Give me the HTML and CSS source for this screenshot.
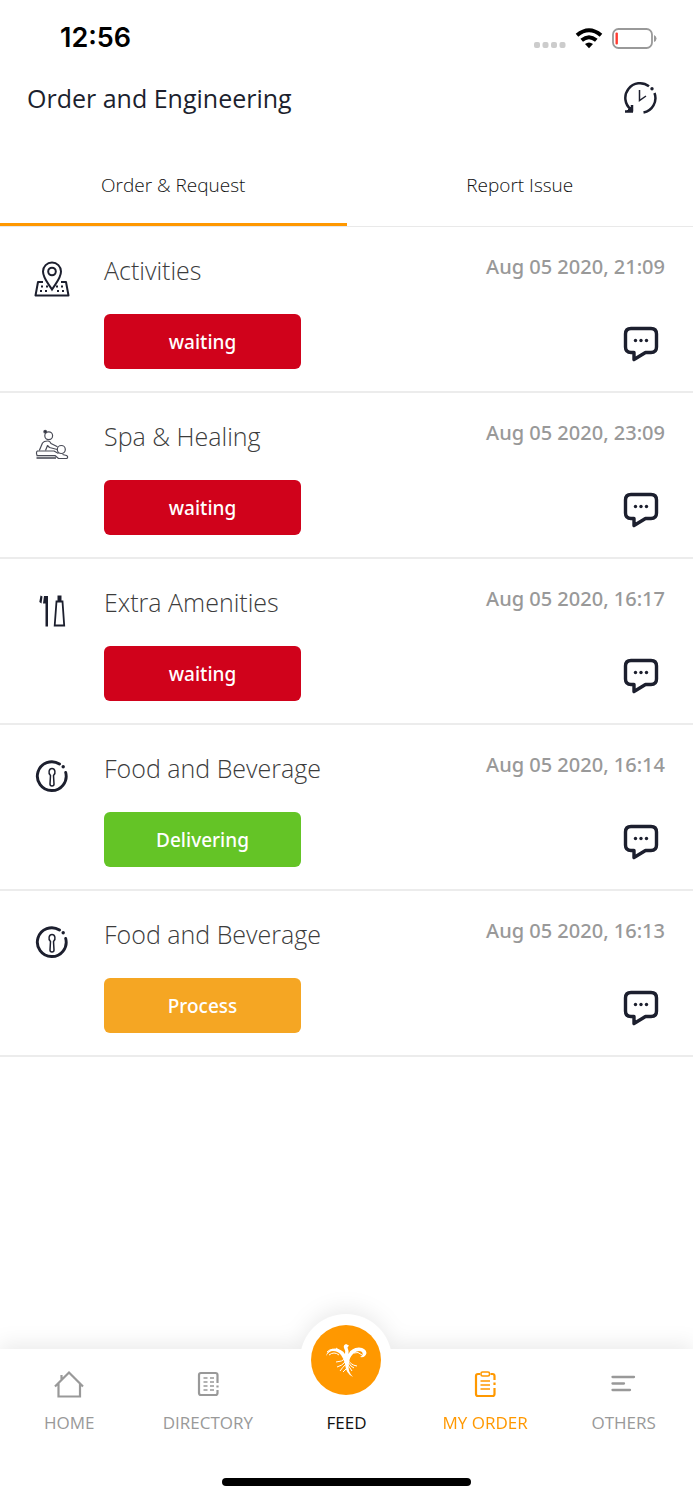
FILE: index.html
```html
<!DOCTYPE html>
<html lang="en">
<head>
<meta charset="utf-8">
<meta name="viewport" content="width=device-width, initial-scale=1">
<title>Order and Engineering</title>
<link rel="stylesheet" href="styles.css">
</head>
<body>
<svg class="sprite" aria-hidden="true">
  <symbol id="chat" viewBox="0 0 36 36">
    <path d="M8 2.500H28Q33.500 2.500 33.500 8V21Q33.500 26.500 28 26.500H22.500L11 33.500V26.500H8Q2.500 26.500 2.500 21V8Q2.500 2.500 8 2.500Z" fill="none" stroke="currentColor" stroke-width="3.400" stroke-linejoin="round"/>
    <g fill="currentColor"><circle cx="12.500" cy="14.500" r="1.700"/><circle cx="18" cy="14.500" r="1.700"/><circle cx="23.500" cy="14.500" r="1.700"/></g>
  </symbol>
  <symbol id="food" viewBox="0 0 36 36">
    <path d="M25.500 5A14.400 14.400 0 1 0 31.700 13.500" fill="none" stroke="currentColor" stroke-width="2.900" stroke-linecap="round"/>
    <circle cx="29.200" cy="7.800" r="1.700" fill="currentColor"/>
    <path d="M16.500 16.500C13.800 14 15 9.500 18 9.500S22.200 14 19.500 16.500L20 25Q20 27 18 27T16 25Z" fill="none" stroke="currentColor" stroke-width="1.500" stroke-linejoin="round"/>
  </symbol>
</svg>
<div class="app">
  <div class="status">
    <span class="clock">12:56</span>
    <div class="indicators">
      <svg class="signal" viewBox="0 0 32 6" fill="#ccc"><rect width="6" height="6" rx="2"/><rect x="8.500" width="6" height="6" rx="2"/><rect x="17" width="6" height="6" rx="2"/><rect x="25.500" width="6" height="6" rx="2"/></svg>
      <svg class="wifi" viewBox="0 0 28 21"><g fill="none" stroke="#000" stroke-width="4"><path d="M2 7.200Q14-2.800 26 7.200"/><path d="M6.700 12.300Q14 6.200 21.300 12.300"/></g><path d="M10 16Q14 12.800 18 16L14 20.300Z"/></svg>
      <svg class="battery" viewBox="0 0 45 21"><rect x="1" y="1" width="39" height="19" rx="5.500" fill="none" stroke="#999" stroke-width="1.800"/><path d="M42 7Q44.500 8 44.500 10.500T42 14Z" fill="#999"/><rect x="3.500" y="4.500" width="2.400" height="12" rx="1" fill="#ff3b30"/></svg>
    </div>
  </div>
  <header class="header">
    <h1 class="title">Order and Engineering</h1>
    <button class="plain" type="button" aria-label="History">
      <svg class="history" viewBox="0 0 34 34" fill="none" stroke="currentColor" stroke-width="2.500">
        <path d="M8 30.500V24M1 30.500H9M7 28.500A14.600 14.600 0 0 1 25 5.300M30.500 12A14.700 14.700 0 0 1 19.500 31.500"/>
        <path d="M2.500 30.500L8.500 24.500V30.500Z" fill="currentColor" stroke-width="1"/>
        <path d="M15.500 9V19.500L22 15" stroke-width="1.500"/><circle cx="28" cy="7.700" r="1.700" fill="currentColor" stroke="none"/>
      </svg>
    </button>
  </header>
  <nav class="tabs">
    <button class="tab tab-active" type="button">Order &amp; Request</button>
    <button class="tab" type="button">Report Issue</button>
  </nav>
  <main class="orders">
    <article class="order">
      <svg class="kind" viewBox="0 0 36 36" fill="none" stroke="currentColor" stroke-width="2">
        <path d="M18 28.500C14 22 9 17 9 10.500A9 9 0 0 1 27 10.500C27 17 22 22 18 28.500Z"/><circle cx="18" cy="10.500" r="3.800"/>
        <path d="M9 21H4L1.500 34.500H34.500L32 21H27" stroke-linejoin="round"/>
        <path d="M7 25.500h2M6 30h2M11 30h2M12 25.500h2M22 25.500h2M27 25.500h2M23 30h2M28 30h2"/>
      </svg>
      <div class="details"><h2 class="name">Activities</h2><button class="state waiting" type="button">waiting</button></div>
      <div class="side"><time class="date">Aug 05 2020, 21:09</time><button class="plain" type="button" aria-label="Message"><svg class="chat"><use href="#chat"/></svg></button></div>
    </article>
    <article class="order">
      <svg class="kind" viewBox="0 0 36 36" fill="none" stroke="#4a4c57" stroke-width="1.200" stroke-linejoin="round">
        <circle cx="14.700" cy="8.800" r="3.900"/><circle cx="11.200" cy="4.700" r="1.300" fill="currentColor"/>
        <circle cx="27.300" cy="22.500" r="4"/>
        <path d="M5.300 23.500L8.500 16Q10 13.800 14 14Q16 14.200 17 16.500L23.500 19.800M11.500 23.500L13.500 18.500L15.500 20.500L23.300 22.500"/>
        <path d="M3 24H20L24.500 26.500M3 24Q1.800 26 3 28.500H21L24.500 31.500H33Q34.500 29.500 32.500 28.500L28.500 27.500"/><path d="M2.500 30.800H22" stroke-width="2.400" stroke="#70727a"/>
      </svg>
      <div class="details"><h2 class="name">Spa &amp; Healing</h2><button class="state waiting" type="button">waiting</button></div>
      <div class="side"><time class="date">Aug 05 2020, 23:09</time><button class="plain" type="button" aria-label="Message"><svg class="chat"><use href="#chat"/></svg></button></div>
    </article>
    <article class="order">
      <svg class="kind" viewBox="0 0 36 36" fill="currentColor">
        <path d="M6.500 2.500L8.500 3.500L7.500 10.500L5.300 9ZM10 3H14V33.500H11.500V10.500H9Z"/><path d="M23.500 2.500H27.500V8H23.500Z"/><path d="M22.500 8.500H28.500L30.200 32.500H20.700Z" fill="none" stroke="currentColor" stroke-width="1.800"/>
      </svg>
      <div class="details"><h2 class="name">Extra Amenities</h2><button class="state waiting" type="button">waiting</button></div>
      <div class="side"><time class="date">Aug 05 2020, 16:17</time><button class="plain" type="button" aria-label="Message"><svg class="chat"><use href="#chat"/></svg></button></div>
    </article>
    <article class="order">
      <svg class="kind"><use href="#food"/></svg>
      <div class="details"><h2 class="name">Food and Beverage</h2><button class="state delivering" type="button">Delivering</button></div>
      <div class="side"><time class="date">Aug 05 2020, 16:14</time><button class="plain" type="button" aria-label="Message"><svg class="chat"><use href="#chat"/></svg></button></div>
    </article>
    <article class="order">
      <svg class="kind"><use href="#food"/></svg>
      <div class="details"><h2 class="name">Food and Beverage</h2><button class="state process" type="button">Process</button></div>
      <div class="side"><time class="date">Aug 05 2020, 16:13</time><button class="plain" type="button" aria-label="Message"><svg class="chat"><use href="#chat"/></svg></button></div>
    </article>
  </main>
  <footer class="dock">
    <nav class="menu">
      <a class="item" href="#home">
        <svg class="glyph" viewBox="0 0 32 32" fill="none" stroke="currentColor" stroke-width="2.200"><path d="M2 18.500L16 4.500L30 18.500M5.500 15.500V28.500H27V15.500M8.500 12V7"/></svg>
        <span>HOME</span></a>
      <a class="item" href="#directory">
        <svg class="glyph" viewBox="0 0 32 32" fill="none" stroke="currentColor" stroke-width="2.200"><path d="M25.500 15V7Q25.500 5 23.500 5H9Q7 5 7 7V25Q7 27 9 27H23.500Q25.500 27 25.500 25V22M25.500 17.500V19.500"/><path d="M11.500 10h4M11.500 14h4M11.500 18h4M11.500 22h4M18 10h4M18 14h4M18 18h4M18 22h4" stroke-width="1.500"/></svg>
        <span>DIRECTORY</span></a>
      <a class="item feed" href="#feed">
        <span class="ring"><svg class="disc" viewBox="0 0 70 70"><circle cx="35" cy="35" r="35" fill="#ff9800"/>
          <path d="M34 39Q33 34 30 30Q27 26 22 26Q18 26 15 31Q17 23.500 24 23.500Q31 24 34 29Q34.500 25 33 23Q32 20 35 19L38 20.500L36.500 22.500Q38 26 37.500 29Q40 23 48 22.500Q55 23 55.500 28Q54.500 33 49 32Q53 30 51 27Q47 24 42 29Q38 33 38 38Q36 46 42 52Q35 49 34 39Z" fill="#fff"/>
          <path d="M16 27Q21 22 27 26M18 30Q23 26 28 30M25 23Q30 25 32 31M41 27Q45 22 50 24M43 28Q47 26 51 30M35 33Q31 37 25 37M35 36Q31 41 26 42M35 39Q31 43 29 46M36 43L32 47M37 34Q39 40 46 41M37 37Q40 42 43 43M37 40L41 46" fill="none" stroke="#fff" stroke-width="1"/></svg></span>
        <span>FEED</span></a>
      <a class="item current" href="#orders">
        <svg class="glyph" viewBox="0 0 32 32" fill="none" stroke="currentColor" stroke-width="2.200"><path d="M11 6H9Q7 6 7 8V26Q7 28 9 28H23.500Q25.500 28 25.500 26V20M25.500 12V8Q25.500 6 23.500 6H21.500M25.500 14.500V17"/><rect x="12" y="4" width="8.500" height="4" rx="1.500" stroke-width="1.600"/><path d="M11.500 13H21M11.500 17H21M11.500 21H21" stroke-width="1.500"/></svg>
        <span>MY ORDER</span></a>
      <a class="item" href="#others">
        <svg class="glyph" viewBox="0 0 32 32" stroke="currentColor" stroke-width="2.300" stroke-linecap="round"><path d="M4.500 9H26M4.500 15.500H16M4.500 22H22"/></svg>
        <span>OTHERS</span></a>
    </nav>
    <div class="home-bar"></div>
  </footer>
</div>
</body>
</html>
```
FILE: styles.css
```css
* { box-sizing: border-box; }
body { margin: 0; background: #fff; color: #1c1f2e; font-family: "Open Sans", "Noto Sans", sans-serif; }
svg { display: block; flex: none; }
button { font: inherit; color: inherit; border: 0; cursor: pointer; }
h1, h2 { margin: 0; font-weight: 300; }
.sprite { position: absolute; width: 0; height: 0; }
.app { min-height: 100vh; display: flex; flex-direction: column; }
.status { display: flex; justify-content: space-between; align-items: center; height: 76px; padding: 0 36px 0 60px; }
.clock { font: 600 27px/32px Inter, sans-serif; color: #000; }
.indicators { display: flex; align-items: center; gap: 9px; }
.signal { width: 32px; height: 6px; margin-top: 14px; }
.wifi { width: 28px; height: 21px; }
.battery { width: 45px; height: 21px; }
.header { display: flex; justify-content: space-between; align-items: center; height: 44px; padding: 0 35px 0 27px; }
.title { font-size: 25px; line-height: 36px; font-weight: 400; }
.plain { background: none; padding: 0; }
.history { width: 34px; height: 34px; }
.tabs { display: flex; margin-top: 26px; border-bottom: 1px solid #e9e9e9; }
.tab { flex: 1; height: 80px; padding: 0; background: none; border-bottom: 3px solid transparent; font-size: 19px; font-weight: 300; color: #111; }
.tab-active { border-bottom-color: #ff9800; }
.orders { flex: 1; }
.order { display: flex; height: 166px; padding: 22px 28px 22px 34px; border-bottom: 2px solid #ececec; }
.kind { width: 36px; height: 36px; margin: 12px 34px 0 0; }
.details { flex: 1; display: flex; flex-direction: column; align-items: flex-start; justify-content: space-between; }
.name { font-size: 25px; line-height: 42px; color: #3c3c3c; }
.state { width: 197px; height: 55px; border-radius: 6px; color: #fff; font: 500 19px/26px "Noto Sans", sans-serif; }
.waiting { background: #d0021b; }
.delivering { background: #64c426; }
.process { background: #f5a623; }
.side { display: flex; flex-direction: column; align-items: flex-end; justify-content: space-between; padding-bottom: 7px; }
.side .plain { margin-right: 6px; }
.date { font: 500 20px/36px "Noto Sans", sans-serif; color: #999; }
.chat { width: 36px; height: 36px; }
.dock { height: 151px; background: #fff; filter: drop-shadow(0 -5px 10px rgba(0, 0, 0, .08)); display: flex; flex-direction: column; justify-content: space-between; align-items: center; padding-bottom: 14px; }
.menu { display: flex; width: 100%; padding-top: 19px; }
.item { position: relative; flex: 1; display: flex; flex-direction: column; align-items: center; justify-content: flex-end; gap: 10px; height: 68px; font-size: 17px; line-height: 26px; color: #999; text-decoration: none; }
.glyph { width: 32px; height: 32px; }
.feed { color: #111; }
.current { color: #ff9800; }
.ring { position: absolute; top: -54px; left: 50%; margin-left: -46px; width: 92px; height: 92px; padding: 11px; border-radius: 50%; background: #fff; }
.disc { width: 70px; height: 70px; }
.home-bar { width: 36%; height: 8px; border-radius: 4px; background: #000; }
```
